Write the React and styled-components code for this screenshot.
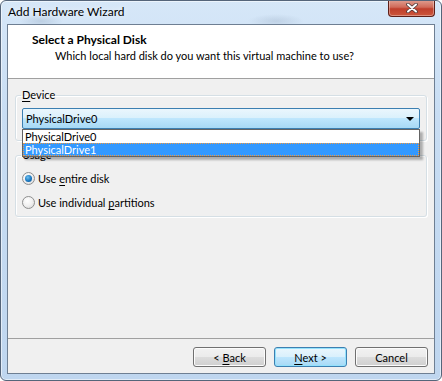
import React from "react";
import styled, { createGlobalStyle } from "styled-components";

const GlobalStyle = createGlobalStyle`
  html, body { margin: 0; padding: 0; background: #ffffff; }
  body {
    width: 442px; height: 381px; overflow: hidden;
    font-family: "Segoe UI", Lato, "Noto Sans", sans-serif;
    font-size: 11px;
    color: #000;
  }
  * { box-sizing: border-box; }
`;

const Window = styled.div`
  width: 442px;
  height: 381px;
  display: flex;
  flex-direction: column;
  border: 1px solid #55657a;
  border-radius: 6px;
  background:
    radial-gradient(ellipse 22px 7px at 40px 20px, rgba(120,140,165,0.25), transparent),
    radial-gradient(ellipse 28px 7px at 275px 20px, rgba(120,140,165,0.22), transparent),
    linear-gradient(180deg, #d6e7f8 0%, #c8ddf3 30%, #bfd6ef 100%);
  box-shadow: inset 0 0 0 1px rgba(255,255,255,0.55);
  overflow: hidden;
`;

const TitleBar = styled.div`
  height: 23px;
  display: flex;
  align-items: flex-start;
  justify-content: space-between;
  padding-left: 7px;
`;

const Title = styled.div`
  font-size: 12px;
  line-height: 21px;
  color: #000;
  text-shadow: 0 0 6px rgba(255,255,255,0.9);
`;

const CloseButton = styled.div`
  width: 47px;
  height: 17px;
  margin-top: -1px;
  margin-right: 6px;
  border: 1px solid #5e1f18;
  border-top: none;
  border-radius: 0 0 4px 4px;
  background: linear-gradient(180deg, #e0a092 0%, #d06a59 45%, #bf3f2c 55%, #cc563b 100%);
  box-shadow: inset 0 0 0 1px rgba(255,255,255,0.35);
  display: flex;
  align-items: center;
  justify-content: center;
`;

const Client = styled.div`
  flex: 1;
  margin: 0 6px 6px 6px;
  border: 1px solid #6e7f93;
  display: flex;
  flex-direction: column;
  background: #f0f0f0;
`;

const Header = styled.div`
  height: 54px;
  background: #ffffff;
  border-bottom: 1px solid #a0a0a0;
  padding: 7px 0 0 24px;
`;

const HeaderTitle = styled.div`
  font-weight: bold;
  font-size: 12px;
  line-height: 16px;
`;

const HeaderSub = styled.div`
  padding-left: 23px;
  line-height: 16px;
  color: #000;
`;

const Body = styled.div`
  flex: 1;
  padding: 8px 7px 0 7px;
  display: flex;
  flex-direction: column;
`;

const Group = styled.fieldset`
  margin: ${p => p.$top}px 0 0 0;
  padding: 0 6px ${p => p.$bottom}px 6px;
  border: 1px solid #d5dfe5;
  border-radius: 3px;
  box-shadow: inset 1px 1px 0 #ffffff, 1px 1px 0 #ffffff;
  min-width: 0;
`;

const Legend = styled.legend`
  padding: 0 1px;
  margin-left: -1px;
  line-height: 16px;
`;

const Mn = styled.span`
  text-decoration: underline;
  text-underline-offset: 2px;
`;

const ComboWrap = styled.div`
  position: relative;
  margin-top: 5px;
`;

const Combo = styled.div`
  height: 21px;
  border: 1px solid #3c7fb1;
  border-radius: 2px;
  background: linear-gradient(180deg, #eaf6fd 0%, #d9f0fc 50%, #bee6fd 50%, #a7d9f5 100%);
  display: flex;
  align-items: center;
  justify-content: space-between;
  padding: 0 5px 0 3px;
`;

const Arrow = styled.span`
  width: 0;
  height: 0;
  border-left: 4px solid transparent;
  border-right: 4px solid transparent;
  border-top: 4px solid #000;
  margin-top: 1px;
`;

const List = styled.div`
  position: absolute;
  left: 0;
  right: 0;
  top: 21px;
  background: #ffffff;
  border: 1px solid #646464;
  box-shadow: 3px 3px 2px rgba(0,0,0,0.28);
  z-index: 2;
`;

const Item = styled.div`
  height: 13px;
  line-height: 13px;
  padding-left: 2px;
  background: ${p => (p.$sel ? "#3399ff" : "transparent")};
  color: ${p => (p.$sel ? "#ffffff" : "#000000")};
  outline: ${p => (p.$sel ? "1px dotted #f39a3f" : "none")};
  outline-offset: -1px;
`;

const RadioRow = styled.div`
  display: flex;
  align-items: center;
  gap: 3px;
  height: 16px;
  margin-top: ${p => p.$top}px;
`;

const RadioCircle = styled.span`
  width: 13px;
  height: 13px;
  border-radius: 50%;
  border: 1px solid #8e8f8f;
  background: radial-gradient(circle at 40% 35%, #ffffff 0%, #f0f0f0 50%, #d2d2d2 100%);
  display: flex;
  align-items: center;
  justify-content: center;
  &::after {
    content: "";
    display: ${p => (p.$on ? "block" : "none")};
    width: 7px;
    height: 7px;
    border-radius: 50%;
    background: radial-gradient(circle at 40% 35%, #6ec0f0 0%, #1a78c0 55%, #0b4f8a 100%);
  }
`;

const Footer = styled.div`
  border-top: 1px solid #a0a0a0;
  padding: 8px 6px 6px 0;
  display: flex;
  justify-content: flex-end;
  gap: 8px;
`;

const Button = styled.div`
  width: 73px;
  height: 20px;
  border: 1px solid ${p => (p.$def ? "#3c7fb1" : "#707070")};
  border-radius: 3px;
  background: ${p =>
    p.$def
      ? "linear-gradient(180deg, #eaf6fd 0%, #d9f0fc 50%, #bee6fd 50%, #a7d9f5 100%)"
      : "linear-gradient(180deg, #f2f2f2 0%, #ebebeb 50%, #dddddd 50%, #cfcfcf 100%)"};
  box-shadow: inset 0 0 0 1px ${p => (p.$def ? "#94e2fc" : "#fcfcfc")};
  display: flex;
  align-items: center;
  justify-content: center;
`;

export default function App() {
  return (
    <>
      <GlobalStyle />
      <Window>
        <TitleBar>
          <Title>Add Hardware Wizard</Title>
          <CloseButton>
            <svg width="12" height="10" viewBox="0 0 12 10">
              <path d="M2 1.5 L10 8.5 M10 1.5 L2 8.5" stroke="#4a3a3a" strokeWidth="3.6" strokeLinecap="round" />
              <path d="M2 1.5 L10 8.5 M10 1.5 L2 8.5" stroke="#ffffff" strokeWidth="2" strokeLinecap="round" />
            </svg>
          </CloseButton>
        </TitleBar>
        <Client>
          <Header>
            <HeaderTitle>Select a Physical Disk</HeaderTitle>
            <HeaderSub>Which local hard disk do you want this virtual machine to use?</HeaderSub>
          </Header>
          <Body>
            <Group $top={0} $bottom={11}>
              <Legend><Mn>D</Mn>evice</Legend>
              <ComboWrap>
                <Combo>
                  <span>PhysicalDrive0</span>
                  <Arrow />
                </Combo>
                <List>
                  <Item>PhysicalDrive0</Item>
                  <Item $sel>PhysicalDrive1</Item>
                </List>
              </ComboWrap>
            </Group>
            <Group $top={6} $bottom={6}>
              <Legend>Usage</Legend>
              <RadioRow $top={7}>
                <RadioCircle $on />
                <span>Use <Mn>e</Mn>ntire disk</span>
              </RadioRow>
              <RadioRow $top={8}>
                <RadioCircle />
                <span>Use individual <Mn>p</Mn>artitions</span>
              </RadioRow>
            </Group>
          </Body>
          <Footer>
            <Button><span>&lt; <Mn>B</Mn>ack</span></Button>
            <Button $def><span><Mn>N</Mn>ext &gt;</span></Button>
            <Button><span>Cancel</span></Button>
          </Footer>
        </Client>
      </Window>
    </>
  );
}
